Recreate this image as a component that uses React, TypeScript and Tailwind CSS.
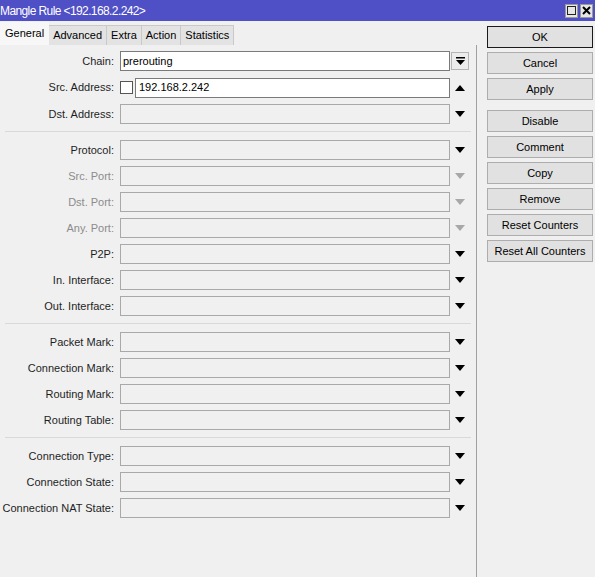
import React from 'react';

type Row = {
  label: string;
  disabled?: boolean;
};

const groups: Row[][] = [
  [
    { label: 'Protocol' },
    { label: 'Src. Port', disabled: true },
    { label: 'Dst. Port', disabled: true },
    { label: 'Any. Port', disabled: true },
    { label: 'P2P' },
    { label: 'In. Interface' },
    { label: 'Out. Interface' },
  ],
  [
    { label: 'Packet Mark' },
    { label: 'Connection Mark' },
    { label: 'Routing Mark' },
    { label: 'Routing Table' },
  ],
  [
    { label: 'Connection Type' },
    { label: 'Connection State' },
    { label: 'Connection NAT State' },
  ],
];

const tabs = ['General', 'Advanced', 'Extra', 'Action', 'Statistics'];

const Triangle = ({ up = false, disabled = false }: { up?: boolean; disabled?: boolean }) => (
  <svg width="10" height="6" viewBox="0 0 10 6" className="block">
    <polygon
      points={up ? '0,6 10,6 5,0' : '0,0 10,0 5,6'}
      fill={disabled ? '#a8a8a8' : '#000'}
    />
  </svg>
);

const Label = ({ text, disabled }: { text: string; disabled?: boolean }) => (
  <div
    className={`w-[120px] shrink-0 pr-[6px] text-right whitespace-nowrap ${
      disabled ? 'text-[#8c8c8c]' : 'text-[#1e1e1e]'
    }`}
  >
    {text}:
  </div>
);

const EmptyRow = ({ row }: { row: Row }) => (
  <div className="flex h-[26px] items-center">
    <Label text={row.label} disabled={row.disabled} />
    <div className="h-[20px] w-[330px] border border-[#a9a9a9] bg-[#f0f0f0]" />
    <div className="flex w-[20px] justify-center">
      <Triangle disabled={row.disabled} />
    </div>
  </div>
);

const Separator = () => (
  <div className="flex h-[10px] items-center px-[5px]">
    <div className="h-[2px] w-full border-t border-[#d9d9d9] border-b-white" />
  </div>
);

const Btn = ({ children, primary = false }: { children: React.ReactNode; primary?: boolean }) => (
  <div
    className={`flex h-[22px] w-[106px] items-center justify-center bg-[#e1e1e1] text-black border ${
      primary ? 'border-[#1a1a1a]' : 'border-[#adadad]'
    }`}
  >
    {children}
  </div>
);

export default function App() {
  return (
    <div
      className="flex h-[577px] w-[595px] flex-col overflow-hidden bg-[#f0f0f0] text-[11px]"
      style={{ fontFamily: '"Liberation Sans", Arial, sans-serif' }}
    >
      {/* title bar */}
      <div className="flex h-[21px] shrink-0 items-center justify-between bg-[#4f4fc6] pr-[2px]">
        <span className="text-[12px] tracking-[-0.6px] text-white">Mangle Rule &lt;192.168.2.242&gt;</span>
        <div className="flex gap-[2px]">
          <div className="flex h-[14px] w-[13px] items-center justify-center bg-[#e6e6e6] border border-[#9a9a9a]">
            <div className="h-[9px] w-[9px] border border-[#222]" />
          </div>
          <div className="flex h-[14px] w-[13px] items-center justify-center bg-[#e6e6e6] border border-[#9a9a9a]">
            <svg width="9" height="9" viewBox="0 0 9 9">
              <path d="M1 1L8 8M8 1L1 8" stroke="#000" strokeWidth="2" />
            </svg>
          </div>
        </div>
      </div>

      <div className="flex flex-1">
        {/* left side */}
        <div className="flex w-[477px] shrink-0 flex-col">
          <div className="flex h-[24px] items-end">
            {tabs.map((t, i) =>
              i === 0 ? (
                <div key={t} className="flex h-[23px] items-center px-[5px] text-black bg-[#f7f7f7]">
                  {t}
                </div>
              ) : (
                <div
                  key={t}
                  className="flex h-[20px] items-center px-[4px] text-black bg-[#e3e3e3] border-t border-r border-[#c9c9c9]"
                >
                  {t}
                </div>
              )
            )}
          </div>

          <div className="flex-1 border-r border-[#a0a0a0] pt-[3px]">
            <div className="flex h-[26px] items-center">
              <Label text="Chain" />
              <div className="flex h-[20px] w-[330px] items-center border border-[#7a7a7a] bg-white px-[2px] text-black">
                prerouting
              </div>
              <div className="ml-[1px] flex h-[18px] w-[18px] items-center justify-center border border-[#b5b5b5] bg-[#ececec]">
                <svg width="9" height="9" viewBox="0 0 9 9">
                  <rect x="0" y="0" width="9" height="1.5" fill="#000" />
                  <polygon points="0,3 9,3 4.5,8" fill="#000" />
                </svg>
              </div>
            </div>

            <div className="flex h-[27px] items-center">
              <Label text="Src. Address" />
              <div className="h-[13px] w-[13px] border border-[#555] bg-white" />
              <div className="ml-[2px] flex h-[20px] w-[315px] items-center border border-[#7a7a7a] bg-white px-[3px] text-black">
                192.168.2.242
              </div>
              <div className="flex w-[20px] justify-center">
                <Triangle up />
              </div>
            </div>

            <EmptyRow row={{ label: 'Dst. Address' }} />

            {groups.map((g, gi) => (
              <React.Fragment key={gi}>
                <Separator />
                {g.map((r) => (
                  <EmptyRow key={r.label} row={r} />
                ))}
              </React.Fragment>
            ))}
          </div>
        </div>

        {/* right side buttons */}
        <div className="flex flex-col gap-[4px] pl-[10px] pt-[5px]">
          <Btn primary>OK</Btn>
          <Btn>Cancel</Btn>
          <Btn>Apply</Btn>
          <div className="h-[2px]" />
          <Btn>Disable</Btn>
          <Btn>Comment</Btn>
          <Btn>Copy</Btn>
          <Btn>Remove</Btn>
          <Btn>Reset Counters</Btn>
          <Btn>Reset All Counters</Btn>
        </div>
      </div>
    </div>
  );
}
